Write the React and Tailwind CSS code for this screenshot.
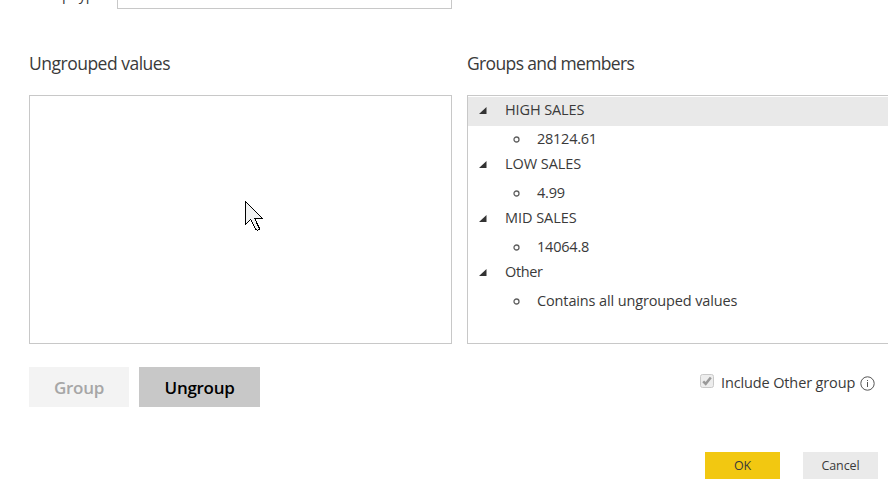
import React from "react";

const groups = [
  { name: "HIGH SALES", member: "28124.61", nameTrack: "tracking-[-0.12px]", memberTrack: "tracking-[-0.25px]", selected: true },
  { name: "LOW SALES", member: "4.99", nameTrack: "tracking-[-0.05px]", memberTrack: "tracking-[-0.2px]" },
  { name: "MID SALES", member: "14064.8", nameTrack: "tracking-[-0.05px]", memberTrack: "tracking-[-0.2px]" },
  { name: "Other", member: "Contains all ungrouped values", nameTrack: "tracking-[-0.35px]", memberTrack: "tracking-[-0.13px]" },
];

function GroupItem({ name, member, nameTrack, memberTrack, selected }) {
  return (
    <li>
      <div className={`flex h-[29px] pl-[11px] ${selected ? "bg-[#e9e9e9]" : ""}`}>
        <svg className="mt-[10px] h-[8px] w-[8px] shrink-0" viewBox="0 0 8 8">
          <path d="M7.5 0V7H0Z" fill="#333" />
        </svg>
        <span className={`ml-[18px] leading-[25px] ${nameTrack}`}>{name}</span>
      </div>
      <div className="flex h-[25px] pl-[45px]">
        <svg className="mt-[10px] h-[7px] w-[7px] shrink-0" viewBox="0 0 7 7">
          <circle cx="3.5" cy="3.5" r="2.5" fill="none" stroke="#606060" strokeWidth="1.3" />
        </svg>
        <span className={`ml-[17px] leading-[25px] ${memberTrack}`}>{member}</span>
      </div>
    </li>
  );
}

export default function App() {
  return (
    <div className="relative h-[492px] w-[888px] overflow-hidden bg-white font-['Open_Sans','Noto_Sans',sans-serif] text-[14.5px] whitespace-nowrap text-[#3a3a3a]">
      <div className="flex h-[9px] pl-[29px]">
        <span className="-mt-[16px] w-[88px] leading-[22px] tracking-[-0.3px]">Group type</span>
        <div className="h-[9px] w-[335px] border border-t-0 border-[#c8c8c8]" />
      </div>
      <div className="flex gap-[15px] pl-[29px]">
        <section className="w-[423px] shrink-0">
          <h2 className="mt-[41px] h-[45px] text-[17.5px] leading-[26px] tracking-[-0.5px]">Ungrouped values</h2>
          <div className="h-[249px] border border-[#c8c8c8]" />
          <div className="mt-[23px] flex gap-[10px] text-[17px] font-semibold">
            <button className="h-[40px] w-[100px] bg-[#f3f3f3] pt-[2px] tracking-[-0.3px] text-[#a6a6a6]">Group</button>
            <button className="h-[40px] w-[121px] bg-[#c8c8c8] pt-[2px] tracking-[-0.3px] text-black">Ungroup</button>
          </div>
        </section>
        <section className="w-[440px] shrink-0">
          <h2 className="mt-[41px] h-[45px] text-[17.5px] leading-[26px] tracking-[-0.64px]">Groups and members</h2>
          <ul className="h-[249px] border border-[#c8c8c8] pt-px">
            {groups.map((g) => <GroupItem key={g.name} {...g} />)}
          </ul>
          <label className="mt-[29px] flex h-[20px] pl-[233px]">
            <svg className="mt-px h-[14px] w-[14px]" viewBox="0 0 14 14">
              <rect x="0.5" y="0.5" width="13" height="13" rx="2" fill="#ededed" stroke="#c9c9c9" />
              <path d="M3.2 7.3 5.7 9.8 10.8 3.5" fill="none" stroke="#999" strokeWidth="2.5" />
            </svg>
            <span className="ml-[7px] w-[134px] leading-[20px] tracking-[-0.13px]">Include Other group</span>
            <svg className="mt-[3px] ml-[5px] h-[15px] w-[15px]" viewBox="0 0 15 15" fill="none" stroke="#555">
              <circle cx="7.5" cy="7.5" r="6.7" />
              <path d="M7.5 6V11M7.5 4V5" />
            </svg>
          </label>
          <div className="mt-[59px] flex gap-[23px] pl-[238px] text-[12.5px]">
            <button className="h-[27px] w-[75px] bg-[#f2c811] pt-[2px] tracking-[-0.3px]">OK</button>
            <button className="h-[27px] w-[75px] bg-[#eaeaea] pt-[2px] tracking-[-0.1px]">Cancel</button>
          </div>
        </section>
      </div>
      <svg className="absolute top-[201px] left-[245px] h-[31px] w-[19px]" viewBox="0 0 19 31" shapeRendering="crispEdges">
        <path d="M.5.8V23.5L5.8 18.2 10.5 28Q11.5 30 14 28.5 14.5 27.5 14 26.5L9.5 17.2H17Z" fill="#f1f2f2" stroke="#000" />
      </svg>
    </div>
  );
}
